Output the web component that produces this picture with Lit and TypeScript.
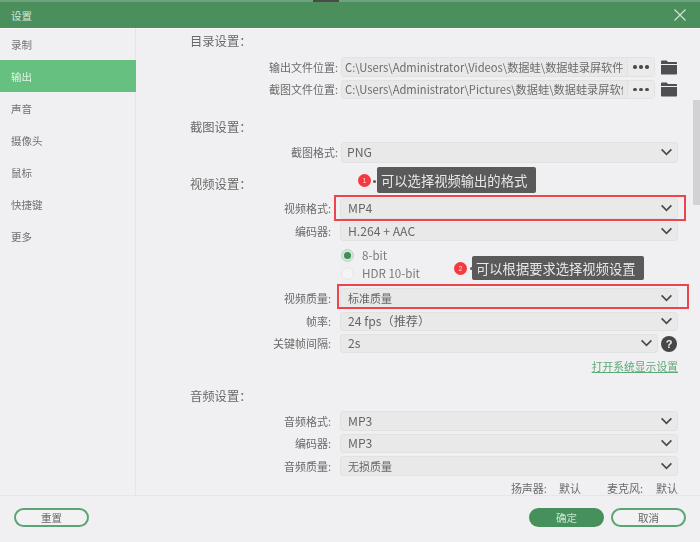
import { LitElement, html, css, svg } from "lit";
import { customElement } from "lit/decorators.js";

const chevron = svg`<svg class="chev" viewBox="0 0 14 9" width="13" height="8"><path d="M1.5 1.5 7 7l5.5-5.5" fill="none" stroke="#4a4a4a" stroke-width="1.9"/></svg>`;
const folder = html`<svg class="folder" viewBox="0 0 16 15" width="16" height="15"><path d="M0 1.5C0 1 .4.6 1 .6h4.6l1.4 1.5h8c.6 0 1 .4 1 1V4H0z" fill="#4f4f4f"/><path d="M0 5h16v8.4c0 .6-.4 1-1 1H1c-.6 0-1-.4-1-1z" fill="#4f4f4f"/></svg>`;

@customElement("app-root")
export class AppRoot extends LitElement {
  static styles = css`
    :host {
      display: block;
      width: 700px;
      height: 542px;
      overflow: hidden;
      position: relative;
      background: #f0f0f2;
      color: #6a6a6a;
      font-family: "Noto Sans CJK SC", "Liberation Sans", sans-serif;
      font-size: 10.5px;
    }
    .page { display: flex; flex-direction: column; height: 542px; filter: blur(0.6px); }
    .strip { height: 2px; background: linear-gradient(90deg, #6fa27e 0 313px, #4a4a4a 313px 339px, #6fa27e 339px); flex: none; }
    .titlebar {
      flex: none; height: 26px; background: #4a8f5c; color: #d6e8da;
      display: flex; align-items: center; justify-content: space-between;
      padding: 0 14px 0 11px; font-size: 10.5px;
    }
    .body { flex: none; height: 468px; display: flex; border-bottom: 1px solid #e6e6e8; border-top: 1px solid #fafafa; box-sizing: border-box; }
    .side { flex: none; width: 136px; box-sizing: border-box; border-right: 1px solid #e5e5e7; margin-top: -1px; }
    .nav { height: 32px; display: flex; align-items: center; padding-left: 11px; color: #717171; }
    .nav.on { background: #66c07f; color: #e4f5e8; margin-right: -1px; }
    .main { flex: 1; position: relative; padding-left: 54px; overflow: hidden; }
    .h { font-size: 12.3px; line-height: 16px; color: #686868; }
    .row { display: flex; align-items: center; }
    .lbl { text-align: right; white-space: nowrap; font-size: 11px; padding-bottom: 1px; }
    .l1 { width: 148px; margin-right: 3px; }
    .l2 { width: 141px; margin-right: 9px; }
    .sel {
      box-sizing: border-box; width: 338px; background: #e9e9e9; border: 1px solid #e2e2e2; border-radius: 3px;
      display: flex; align-items: center; justify-content: space-between;
      padding: 0 4px 1px 7px; color: #666; font-size: 11px; flex: none;
    }
    .sel.narrow { padding-left: 5px; }
    .sel .lat { font-size: 12.2px; }
    .path { box-sizing: border-box; width: 314px; height: 20px; display: flex; background: #e9e9e9; border: 1px solid #e2e2e2; border-radius: 3px; font-size: 11.2px; color: #6c6c6c; flex: none; }
    .path.short { height: 19px; }
    .path span { flex: 1; min-width: 0; overflow: hidden; white-space: nowrap; margin: 0 4px 0 3px; line-height: 18px; }
    .path.short span { line-height: 17px; }
    .dots { width: 26px; flex: none; background: #ebebeb; border-left: 1px solid #e2e2e2; display: flex; align-items: center; justify-content: center; gap: 2.5px; }
    .dots i { width: 3.4px; height: 3.4px; border-radius: 50%; background: #4d4d4d; }
    .folder { margin-left: 6px; flex: none; }
    .radio { display: flex; align-items: center; gap: 8px; padding-left: 151px; height: 18px; font-size: 11.6px; color: #7a7a7a; }
    .dot { width: 13px; height: 13px; border-radius: 50%; box-sizing: border-box; background: #f4f4f5; border: 1px solid #e4e4e4; display: flex; align-items: center; justify-content: center; }
    .dot.on { background: #d6e6da; border-color: #b9d2bf; }
    .dot.on::after { content: ""; width: 7px; height: 7px; border-radius: 50%; background: #3f8f55; }
    .q { width: 16px; height: 16px; border-radius: 50%; background: #474747; color: #eee; font: bold 11px/16px "Liberation Sans", sans-serif; text-align: center; margin-left: 3px; flex: none; }
    .link { width: 488px; text-align: right; color: #5ea777; text-decoration: underline; font-size: 10.8px; line-height: 14px; }
    .info { display: flex; justify-content: flex-end; width: 488px; line-height: 14px; color: #6a6a6a; font-size: 11px; }
    .scroll { position: absolute; right: 0; top: 71px; width: 7px; height: 105px; background: #d2d2d4; }
    .foot { flex: 1; display: flex; align-items: center; justify-content: space-between; padding: 0 14px 3px; }
    .btn { box-sizing: border-box; width: 75px; height: 19px; border-radius: 10px; border: 2px solid #5aa573; display: flex; align-items: center; justify-content: center; color: #666; font-size: 10.5px; background: #f2f2f4; }
    .btn.fill { background: #46915b; border-color: #46915b; color: #cfe6d6; }
    .right { display: flex; gap: 7px; }

    .overlay { position: absolute; inset: 0; filter: blur(0.4px); }
    .box { position: absolute; border: 2px solid #f0444c; box-sizing: border-box; }
    .tip { position: absolute; background: #5a5a5a; color: #e8e8e8; border-radius: 2px; font-size: 13.3px; display: flex; align-items: center; box-sizing: border-box; white-space: nowrap; padding-left: 4px; }
    .num { position: absolute; width: 13px; height: 13px; border-radius: 50%; background: #f23a3f; color: #f8dada; font: 7px/13px "Liberation Sans", sans-serif; text-align: center; }
    .pin { position: absolute; width: 3px; height: 3px; border-radius: 50%; background: #5a5a5a; }
  `;

  private sel(text: string, h: number, lat = false, w = 338, narrow = false) {
    return html`<div class="sel ${narrow ? "narrow" : ""}" style="height:${h}px;width:${w}px"><span class="${lat ? "lat" : ""}">${text}</span>${chevron}</div>`;
  }

  private row(label: string, text: string, h: number, top: number, lat = true) {
    return html`<div class="row" style="margin-top:${top}px"><div class="lbl l2">${label}</div>${this.sel(text, h, lat)}</div>`;
  }

  render() {
    return html`
      <div class="page">
        <div class="strip"></div>
        <div class="titlebar">
          <span>设置</span>
          <svg viewBox="0 0 12 12" width="12" height="12"><path d="M.5.5l11 11M11.5.5l-11 11" stroke="#d4e6d9" stroke-width="1.1" fill="none"/></svg>
        </div>
        <div class="body">
          <div class="side">
            <div class="nav">录制</div>
            <div class="nav on">输出</div>
            <div class="nav">声音</div>
            <div class="nav">摄像头</div>
            <div class="nav">鼠标</div>
            <div class="nav">快捷键</div>
            <div class="nav">更多</div>
          </div>
          <div class="main">
            <div class="h" style="margin-top:4px">目录设置：</div>
            <div class="row" style="margin-top:8px"><div class="lbl l1">输出文件位置:</div><div class="path"><span>C:\\Users\\Administrator\\Videos\\数据蛙\\数据蛙录屏软件</span><div class="dots"><i></i><i></i><i></i></div></div>${folder}</div>
            <div class="row" style="margin-top:3px"><div class="lbl l1">截图文件位置:</div><div class="path short"><span>C:\\Users\\Administrator\\Pictures\\数据蛙\\数据蛙录屏软件</span><div class="dots"><i></i><i></i><i></i></div></div>${folder}</div>
            <div class="h" style="margin-top:20px">截图设置：</div>
            <div class="row" style="margin-top:7px"><div class="lbl l1">截图格式:</div>${this.sel("PNG", 21, true, 337, true)}</div>
            <div class="h" style="margin-top:13px">视频设置：</div>
            ${this.row("视频格式:", "MP4", 21, 6)}
            ${this.row("编码器:", "H.264 + AAC", 19, 3)}
            <div class="radio" style="margin-top:5px"><div class="dot on"></div>8-bit</div>
            <div class="radio"><div class="dot"></div>HDR 10-bit</div>
            ${this.row("视频质量:", "标准质量", 21, 6, false)}
            ${this.row("帧率:", "24 fps（推荐）", 19, 3)}
            <div class="row" style="margin-top:3px"><div class="lbl l2">关键帧间隔:</div>${this.sel("2s", 19, true, 318)}<div class="q">?</div></div>
            <div class="link" style="margin-top:6px">打开系统显示设置</div>
            <div class="h" style="margin-top:15px">音频设置：</div>
            ${this.row("音频格式:", "MP3", 20, 7)}
            ${this.row("编码器:", "MP3", 19, 3)}
            ${this.row("音频质量:", "无损质量", 20, 3, false)}
            <div class="info" style="margin-top:5px"><span>扬声器:</span><span style="margin-left:12px">默认</span><span style="margin-left:26px">麦克风:</span><span style="margin-left:13px">默认</span></div>
            <div class="scroll"></div>
          </div>
        </div>
        <div class="foot">
          <div class="btn">重置</div>
          <div class="right"><div class="btn fill">确定</div><div class="btn">取消</div></div>
        </div>
      </div>
      <div class="overlay">
        <div class="box" style="left:334px;top:195px;width:352px;height:26px"></div>
        <div class="box" style="left:337px;top:284px;width:352px;height:25px"></div>
        <div class="num" style="left:358px;top:174px">1</div>
        <div class="pin" style="left:373px;top:180px"></div>
        <div class="tip" style="left:377px;top:167px;width:159px;height:26px">可以选择视频输出的格式</div>
        <div class="num" style="left:454px;top:262px">2</div>
        <div class="pin" style="left:470px;top:267px"></div>
        <div class="tip" style="left:472px;top:256px;width:172px;height:24px">可以根据要求选择视频设置</div>
      </div>
    `;
  }
}
